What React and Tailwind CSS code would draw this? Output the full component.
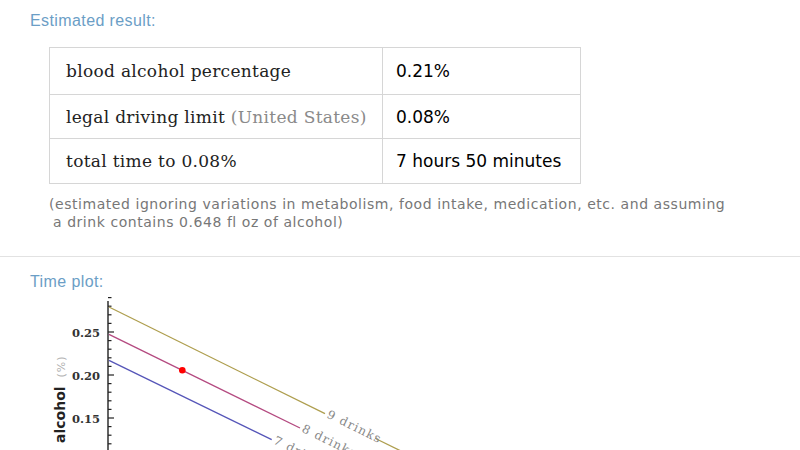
import React from 'react';

const rows = [
    { label: 'blood alcohol percentage', note: null, value: '0.21%', h: 'h-[47px]' },
    { label: 'legal driving limit', note: '(United States)', value: '0.08%', h: 'h-[44px]' },
    { label: 'total time to 0.08%', note: null, value: '7 hours 50 minutes', h: 'h-[45px]' },
];

// y = 0.25 at 335, 0.05 per 43px
const yOf = v => 335 + (0.25 - v) * 860;

function TimePlot() {
    const ticks = [];
    for (let i = 10; i <= 29; i++) {
        const v = i / 100;
        const major = i % 5 === 0;
        ticks.push(
            <line key={i} x1="108" x2={major ? 114 : 111.5} y1={yOf(v)} y2={yOf(v)} stroke="#222" strokeWidth="1.2" />
        );
    }
    const curves = [
        { c: '#ae9e4e', x0: 109, y0: 310, x1: 325, y1: 416.7, rx: 375, label: '9 drinks' },
        { c: '#b44a80', x0: 109, y0: 337.3, x1: 300, y1: 431, rx: 352, label: '8 drinks' },
        { c: '#5555b8', x0: 109, y0: 363.3, x1: 271.7, y1: 442.7, rx: 325, label: '7 drinks' },
    ];
    const slope = 0.491;
    const ang = (Math.atan(slope) * 180) / Math.PI;
    return (
        <svg width="800" height="160" viewBox="0 295 800 160" className="block">
            <line x1="108" x2="108" y1="304" y2="460" stroke="#222" strokeWidth="1.4" />
            {ticks}
            {[0.25, 0.2, 0.15].map(v => (
                <text key={v} x="100" y={yOf(v) + 4.5} textAnchor="end" fontSize="11.5" fontWeight="600" fill="#333" fontFamily="'DejaVu Serif', serif">
                    {v.toFixed(2)}
                </text>
            ))}
            <text transform="translate(65 446) rotate(-90)" fontSize="14" fontFamily="'DejaVu Sans', sans-serif">
                <tspan fontWeight="bold" fill="#222">alcohol</tspan>
                <tspan fill="#b0b0b0" fontSize="11" dx="9" letterSpacing="1">(%)</tspan>
            </text>
            {curves.map(k => (
                <g key={k.label}>
                    <line x1={k.x0} y1={k.y0} x2={k.x1} y2={k.y1} stroke={k.c} strokeWidth="1.3" />
                    <line x1={k.rx} y1={k.y1 + (k.rx - k.x1) * slope} x2={k.rx + 80} y2={k.y1 + (k.rx + 80 - k.x1) * slope} stroke={k.c} strokeWidth="1.3" />
                    <text transform={`translate(${k.x1 + 1} ${k.y1 + 3.5}) rotate(${ang})`} fontSize="12" letterSpacing="1.2" fill="#888" fontFamily="'DejaVu Serif', serif">
                        {k.label}
                    </text>
                </g>
            ))}
            <circle cx="182.3" cy="373.3" r="3.3" fill="#f00" />
        </svg>
    );
}

export default function App() {
    return (
        <div className="w-[800px] h-[450px] overflow-hidden bg-white">
            {/* Estimated result */}
            <section className="pt-[11px]">
                <h2 className="pl-[30px] text-[16px] leading-[20px] tracking-[0.4px] text-[#6b9ec6] font-['Liberation_Sans',sans-serif]">Estimated result:</h2>
                <table className="ml-[49px] mt-[16px] border-collapse">
                    <tbody>
                        {rows.map(r => (
                            <tr key={r.label} className={r.h}>
                                <td className="w-[333px] border border-[#d6d6d6] p-0 pl-[16px] pt-[2px] text-[17px] tracking-[0.3px] text-[#222] font-['DejaVu_Serif',serif]">
                                    {r.label}
                                    {r.note && <span className="text-[#8a8a8a]"> {r.note}</span>}
                                </td>
                                <td className="w-[198px] border border-[#d6d6d6] p-0 pl-[13px] pt-[2px] text-[17px] text-black font-['DejaVu_Sans',sans-serif]">
                                    {r.value}
                                </td>
                            </tr>
                        ))}
                    </tbody>
                </table>
                <p className="ml-[49px] mt-[11px] text-[14px] leading-[18px] tracking-[0.55px] text-[#777] font-['DejaVu_Sans',sans-serif]">
                    (estimated ignoring variations in metabolism, food intake, medication, etc. and assuming
                    <br />
                    <span className="pl-[4px]">a drink contains 0.648 fl oz of alcohol)</span>
                </p>
            </section>

            <div className="mt-[25px] h-px bg-[#e2e2e2]" />

            {/* Time plot */}
            <section className="pt-[15px]">
                <h2 className="pl-[30px] text-[16px] leading-[20px] tracking-[0.4px] text-[#6b9ec6] font-['Liberation_Sans',sans-serif]">Time plot:</h2>
                <TimePlot />
            </section>
        </div>
    );
}
